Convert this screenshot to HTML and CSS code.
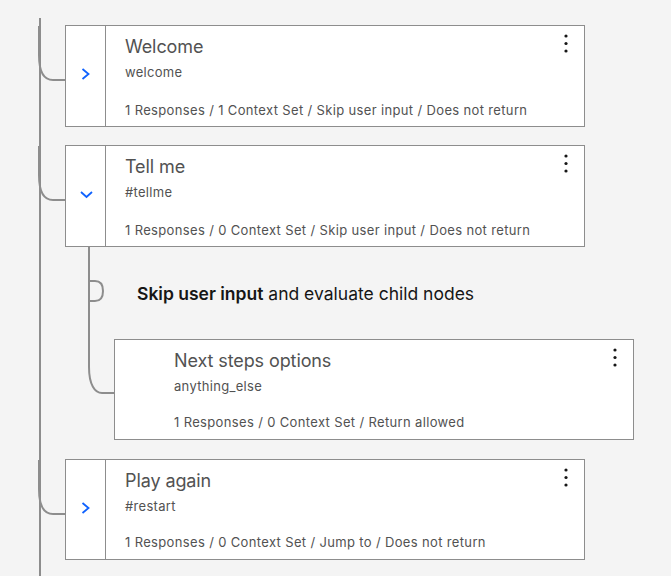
FILE: index.html
```html
<!DOCTYPE html>
<html>
<head>
<meta charset="utf-8">
<link rel="stylesheet" href="styles.css">
</head>
<body>
<div class="tree">
  <div class="node">
    <div class="row">
      <svg class="branch" width="27" height="57" viewBox="0 0 27 57"><path d="M1 1V30C1 48 7 55 15 55H27"/></svg>
      <div class="card">
        <div class="toggle"><svg class="chev" width="20" height="20" viewBox="0 0 20 20"><path d="M6.5 5L12.5 10L6.5 15"/></svg></div>
        <div class="body">
          <div class="head"><div class="title">Welcome</div><svg class="kebab" width="8" height="22" viewBox="0 0 8 22"><circle cx="4" cy="3" r="1.6"/><circle cx="4" cy="10.5" r="1.6"/><circle cx="4" cy="18" r="1.6"/></svg></div>
          <div class="cond">welcome</div>
          <div class="meta">1 Responses / 1 Context Set / Skip user input / Does not return</div>
        </div>
      </div>
    </div>
  </div>
  <div class="node">
    <div class="row">
      <svg class="branch" width="27" height="57" viewBox="0 0 27 57"><path d="M1 1V30C1 48 7 55 15 55H27"/></svg>
      <div class="card">
        <div class="toggle"><svg class="chev" width="20" height="20" viewBox="0 0 20 20"><path d="M5 8L10.5 13L16 8"/></svg></div>
        <div class="body">
          <div class="head"><div class="title">Tell me</div><svg class="kebab" width="8" height="22" viewBox="0 0 8 22"><circle cx="4" cy="3" r="1.6"/><circle cx="4" cy="10.5" r="1.6"/><circle cx="4" cy="18" r="1.6"/></svg></div>
          <div class="cond">#tellme</div>
          <div class="meta">1 Responses / 0 Context Set / Skip user input / Does not return</div>
        </div>
      </div>
    </div>
    <div class="children">
      <div class="skip">
        <svg class="line" width="16" height="92" viewBox="0 0 16 92"><path d="M1 0V92M1 34H7C12.5 34 15 38 15 44C15 50 12.5 54 7 54H1"/></svg>
        <p><b>Skip user input</b> and evaluate child nodes</p>
      </div>
      <div class="row">
        <svg class="line" width="26" height="56" viewBox="0 0 26 56"><path d="M1 0V28C1 46 7 54 14 54H26"/></svg>
        <div class="card short">
          <div class="toggle empty"></div>
          <div class="body">
            <div class="head"><div class="title">Next steps options</div><svg class="kebab" width="8" height="22" viewBox="0 0 8 22"><circle cx="4" cy="3" r="1.6"/><circle cx="4" cy="10.5" r="1.6"/><circle cx="4" cy="18" r="1.6"/></svg></div>
            <div class="cond">anything_else</div>
            <div class="meta">1 Responses / 0 Context Set / Return allowed</div>
          </div>
        </div>
      </div>
    </div>
  </div>
  <div class="node">
    <div class="row">
      <svg class="branch" width="27" height="57" viewBox="0 0 27 57"><path d="M1 1V30C1 48 7 55 15 55H27"/></svg>
      <div class="card short">
        <div class="toggle"><svg class="chev" width="20" height="20" viewBox="0 0 20 20"><path d="M6.5 5L12.5 10L6.5 15"/></svg></div>
        <div class="body">
          <div class="head"><div class="title">Play again</div><svg class="kebab" width="8" height="22" viewBox="0 0 8 22"><circle cx="4" cy="3" r="1.6"/><circle cx="4" cy="10.5" r="1.6"/><circle cx="4" cy="18" r="1.6"/></svg></div>
          <div class="cond">#restart</div>
          <div class="meta">1 Responses / 0 Context Set / Jump to / Does not return</div>
        </div>
      </div>
    </div>
  </div>
</div>
</body>
</html>
```
FILE: styles.css
```css
html, body {
  margin: 0;
  background: #f4f4f4;
  font-family: Inter, "Noto Sans", sans-serif;
  overflow: hidden;
}
.tree {
  margin: 18px 0 0 39px;
  border-left: 2px solid #8d8d8d;
  padding: 7px 0 30px;
}
.node + .node {
  margin-top: 18px;
}
.row {
  display: flex;
  align-items: flex-start;
}
.branch {
  flex: none;
  margin-left: -3px;
}
.branch, .line {
  flex: none;
  fill: none;
  stroke: #8d8d8d;
  stroke-width: 2;
}
.card {
  display: flex;
  width: 520px;
  height: 102px;
  box-sizing: border-box;
  border: 1px solid #8d8d8d;
  background: #fff;
}
.card.short {
  height: 101px;
}
.toggle {
  flex: none;
  width: 40px;
  box-sizing: border-box;
  border-right: 1px solid #8d8d8d;
  display: flex;
  justify-content: center;
  align-items: flex-start;
  padding-top: 38px;
}
.toggle.empty {
  border-right: none;
}
.chev {
  fill: none;
  stroke: #0f62fe;
  stroke-width: 1.8;
}
.body {
  flex: 1;
  display: flex;
  flex-direction: column;
  padding: 9px 14px 7px 19px;
  color: #525252;
}
.short .body {
  padding-bottom: 8px;
}
.head {
  display: flex;
  justify-content: space-between;
  align-items: flex-start;
}
.title {
  font-size: 18px;
  line-height: 24px;
  letter-spacing: -0.1px;
}
.kebab {
  fill: #161616;
  margin-top: -2px;
}
.cond {
  font-size: 13px;
  line-height: 18px;
  margin-top: 4px;
  letter-spacing: 0.3px;
}
.meta {
  margin-top: auto;
  font-size: 13px;
  line-height: 18px;
  letter-spacing: 0.35px;
}
.children {
  margin-left: 47px;
  padding-bottom: 1px;
}
.skip {
  display: flex;
  align-items: center;
  height: 92px;
}
.skip p {
  margin: 2px 0 0 33px;
  font-size: 17.5px;
  line-height: 24px;
  color: #161616;
}
.skip b {
  font-weight: 600;
}
```
